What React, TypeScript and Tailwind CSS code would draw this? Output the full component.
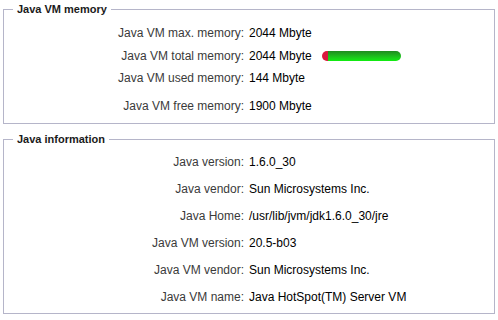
import React from 'react'

type Row = { label: string; value: string; bar?: boolean; className: string }

const memoryRows: Row[] = [
  { label: 'Java VM max. memory:', value: '2044 Mbyte', className: 'h-5 mt-0' },
  { label: 'Java VM total memory:', value: '2044 Mbyte', bar: true, className: 'h-5 mt-[3px]' },
  { label: 'Java VM used memory:', value: '144 Mbyte', className: 'h-5 mt-[2px]' },
  { label: 'Java VM free memory:', value: '1900 Mbyte', className: 'h-5 mt-[8px]' },
]

const javaRows: Row[] = [
  { label: 'Java version:', value: '1.6.0_30', className: 'h-[27px]' },
  { label: 'Java vendor:', value: 'Sun Microsystems Inc.', className: 'h-[27px]' },
  { label: 'Java Home:', value: '/usr/lib/jvm/jdk1.6.0_30/jre', className: 'h-[27px]' },
  { label: 'Java VM version:', value: '20.5-b03', className: 'h-[27px]' },
  { label: 'Java VM vendor:', value: 'Sun Microsystems Inc.', className: 'h-[27px]' },
  { label: 'Java VM name:', value: 'Java HotSpot(TM) Server VM', className: 'h-[27px]' },
]

const MemoryBar = ({ used, total }: { used: number; total: number }) => (
  <div className="ml-[10px] flex h-[10px] w-[79px] overflow-hidden rounded-full">
    <div className="h-full bg-[#d9183f]" style={{ width: Math.max(5, Math.round((used / total) * 79)) }} />
    <div className="h-full flex-1 bg-gradient-to-b from-[#1f8a1f] to-[#10ee10]" />
  </div>
)

const Section = ({ title, rows, className }: { title: string; rows: Row[]; className: string }) => (
  <fieldset className={`mx-[3px] border border-[#b5b5c9] ${className}`}>
    <legend className="ml-[9px] px-[4px] text-[11px] font-bold leading-[14px] text-[#1a1a1a]">{title}</legend>
    {rows.map((row) => (
      <div key={row.label} className={`flex items-center text-[12px] ${row.className}`}>
        <div className="w-[240px] shrink-0 text-right text-[#3a3a3a]">{row.label}</div>
        <div className="pl-[5px] text-black">{row.value}</div>
        {row.bar && <MemoryBar used={144} total={2044} />}
      </div>
    ))}
  </fieldset>
)

export default function App() {
  return (
    <div
      className="h-[320px] w-[498px] bg-white pt-[2px]"
      style={{ fontFamily: '"Liberation Sans", Arial, sans-serif' }}
    >
      <Section title="Java VM memory" rows={memoryRows} className="pt-[7px] pb-[7px]" />
      <Section title="Java information" rows={javaRows} className="mt-2 pt-[2px] pb-[3px]" />
    </div>
  )
}
